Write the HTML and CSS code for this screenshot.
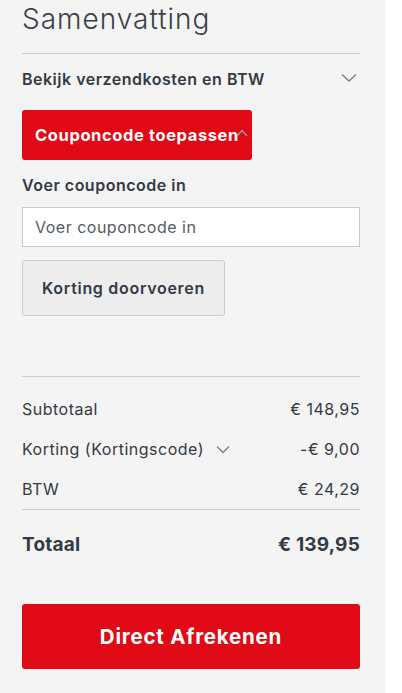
FILE: index.html
```html
<!DOCTYPE html>
<html lang="nl">
<head>
<meta charset="utf-8">
<link rel="stylesheet" href="styles.css">
</head>
<body>
<div class="panel">
  <h1 class="title">Samenvatting</h1>
  <div class="shipping">
    <span>Bekijk verzendkosten en BTW</span>
    <svg class="chev" width="16" height="10" viewBox="0 0 16 10"><path d="M1 1.5 L8 8 L15 1.5" fill="none" stroke="#7a8088" stroke-width="1.3"/></svg>
  </div>
  <button class="coupon-toggle"><span class="ct-text">Couponcode toepassen</span><svg class="chev-up" width="12" height="8" viewBox="0 0 12 8"><path d="M1 7 L6 1.5 L11 7" fill="none" stroke="#9aa0a6" stroke-width="1.3"/></svg></button>
  <label class="label" for="cc">Voer couponcode in</label>
  <input id="cc" class="input" type="text" placeholder="Voer couponcode in">
  <button class="apply">Korting doorvoeren</button>
  <div class="totals">
    <div class="row"><span>Subtotaal</span><span>€ 148,95</span></div>
    <div class="row"><span class="disc">Korting (Kortingscode)<svg class="chev-s" width="14" height="9" viewBox="0 0 14 9"><path d="M1 1.5 L7 7.5 L13 1.5" fill="none" stroke="#7a8088" stroke-width="1.3"/></svg></span><span>-€ 9,00</span></div>
    <div class="row"><span>BTW</span><span>€ 24,29</span></div>
  </div>
  <div class="total"><span>Totaal</span><span>€ 139,95</span></div>
  <button class="checkout">Direct Afrekenen</button>
</div>
</body>
</html>
```
FILE: styles.css
```css
* { box-sizing: border-box; }
html, body { margin: 0; background: #fff; }
body { font-family: Inter, "Open Sans", sans-serif; color: #333a44; }
.panel {
  width: 385px;
  height: 693px;
  background: #f4f4f4;
  padding: 2px 25px 0 22px;
  display: flex;
  flex-direction: column;
}
.title {
  margin: 0;
  font-size: 28px;
  font-weight: 300;
  line-height: 34px;
  color: #3a4049;
  padding-bottom: 17px;
  border-bottom: 1px solid #cfcfcf;
  letter-spacing: 1px;
}
.shipping {
  display: flex;
  justify-content: space-between;
  align-items: center;
  height: 50px;
  font-size: 16px;
  font-weight: 600;
  color: #333a44;
  letter-spacing: 0.5px;
}
.chev { margin-right: 3px; margin-top: -3px; }
.coupon-toggle {
  margin-top: 6px;
  width: 230px;
  height: 50px;
  background: #e10915;
  border: 0;
  border-radius: 3px;
  color: #fff;
  font-family: inherit;
  font-size: 16.5px;
  font-weight: 700;
  display: flex;
  align-items: center;
  padding: 0 0 0 13px;
  position: relative;
  overflow: hidden;
  letter-spacing: 0.6px;
}
.ct-text { white-space: nowrap; }
.chev-up { position: absolute; left: 214px; top: 19px; }
.label {
  display: block;
  margin-top: 15px;
  font-size: 16px;
  font-weight: 600;
  color: #333a44;
  line-height: 20px;
  letter-spacing: 0.5px;
}
.input {
  margin-top: 12px;
  width: 100%;
  height: 40px;
  border: 1px solid #c9c9c9;
  background: #fff;
  padding: 0 12px;
  font-family: inherit;
  font-size: 16px;
  color: #333;
  letter-spacing: 0.5px;
}
.input::placeholder { color: #555b62; }
.apply {
  margin-top: 13px;
  width: 203px;
  height: 56px;
  background: #ededed;
  border: 1px solid #cdcdcd;
  border-radius: 3px;
  font-family: inherit;
  font-size: 16px;
  font-weight: 600;
  color: #333a44;
  letter-spacing: 0.7px;
  padding: 0;
}
.totals {
  margin-top: 60px;
  border-top: 1px solid #cfcfcf;
  border-bottom: 1px solid #cfcfcf;
  padding: 12px 0 0;
}
.row {
  display: flex;
  justify-content: space-between;
  align-items: center;
  height: 40px;
  font-size: 16px;
  color: #333a44;
  letter-spacing: 0.5px;
}
.disc { display: flex; align-items: center; }
.chev-s { margin-left: 12px; }
.total {
  display: flex;
  justify-content: space-between;
  align-items: center;
  height: 68px;
  font-size: 19px;
  font-weight: 700;
  color: #333a44;
  letter-spacing: 0.2px;
}
.checkout {
  margin-top: 26px;
  width: 100%;
  height: 65px;
  background: #e10915;
  border: 0;
  border-radius: 3px;
  color: #fff;
  font-family: inherit;
  font-size: 20.5px;
  font-weight: 700;
  letter-spacing: 0.8px;
}
```
